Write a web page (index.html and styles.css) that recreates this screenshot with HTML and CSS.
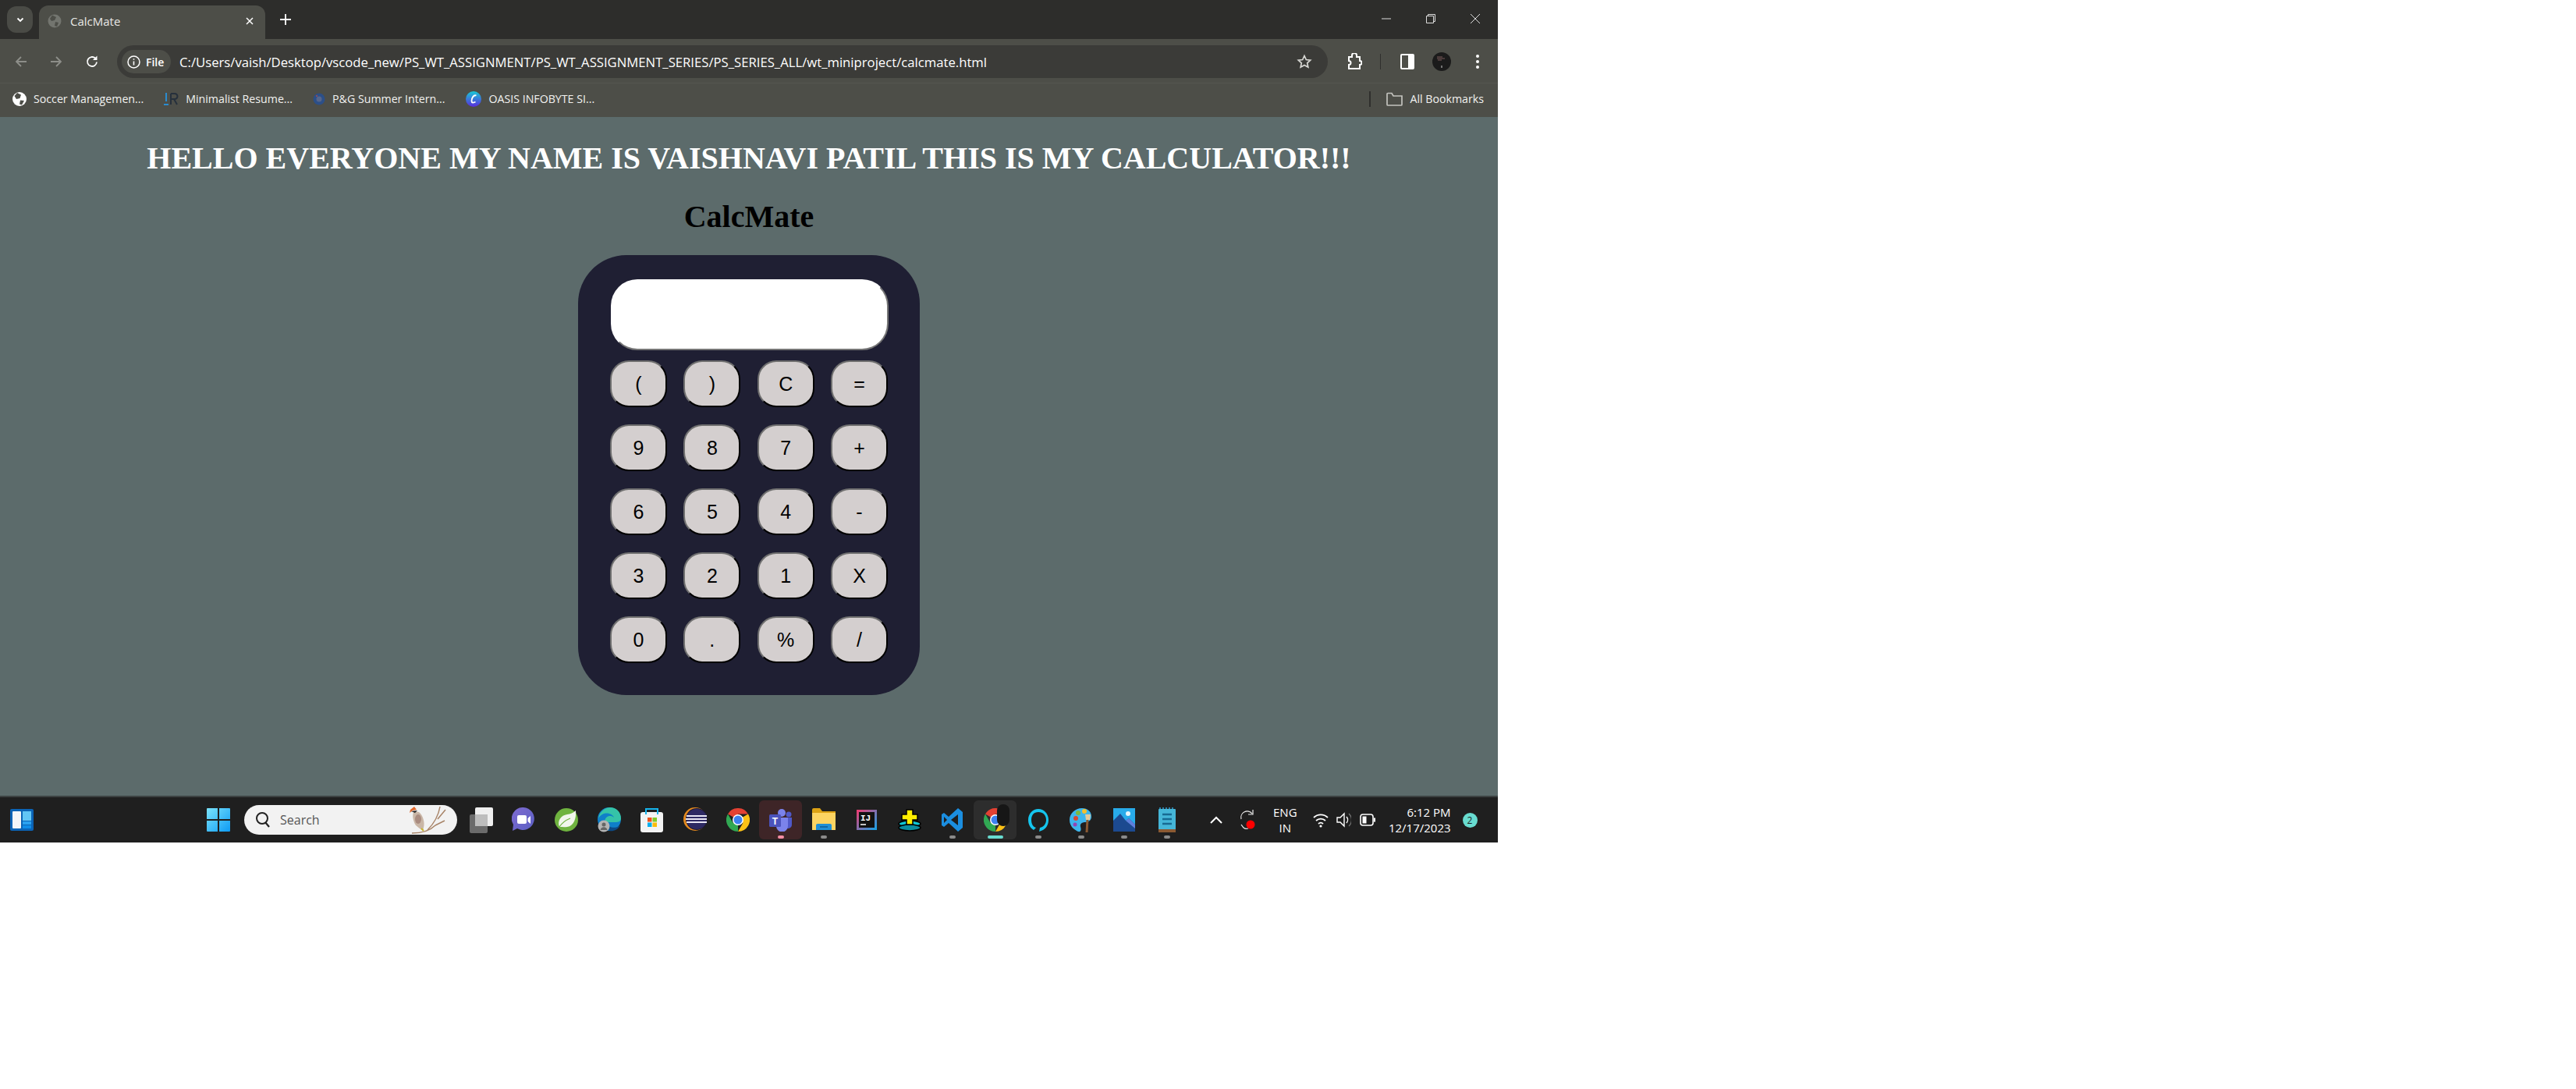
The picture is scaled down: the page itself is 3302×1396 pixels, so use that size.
FILE: index.html
```html
<!DOCTYPE html>
<html lang="en">
<head>
  <meta charset="UTF-8" />
  <title>CalcMate</title>
  <link rel="stylesheet" href="styles.css">
</head>
<body>
  <div class="screen">
    <!-- tab strip -->
    <div class="tabstrip">
      <div class="tablist">
        <svg width="12" height="12" viewBox="0 0 12 12"><path d="M2.5 4.5 6 8l3.500-3.500" fill="none" stroke="#fff" stroke-width="1.800"/></svg>
      </div>
      <div class="tab">
        <svg class="tab-icon" width="18" height="18" viewBox="0 0 18 18"><circle cx="9" cy="9" r="8.500" fill="#73756f"/><path d="M6 1.500 11 4 9 8 5 9 3 6zM10 10l4 1-2 5-3-1z" fill="#4d4e48"/></svg>
        <span class="tab-title">CalcMate</span>
        <svg class="tab-close" width="12" height="12" viewBox="0 0 12 12"><path d="M2 2l8 8M10 2l-8 8" stroke="#fff" stroke-width="1.500"/></svg>
      </div>
      <svg class="newtab" width="16" height="16" viewBox="0 0 16 16"><path d="M8 1v14M1 8h14" stroke="#fff" stroke-width="1.800"/></svg>
      <div class="winctl">
        <svg width="14" height="14" viewBox="0 0 14 14"><path d="M1 7h12" stroke="#ddd" stroke-width="1"/></svg>
        <svg width="14" height="14" viewBox="0 0 14 14"><path d="M3.500 3.500V1.500h9v9h-2M1.500 3.500h9v9h-9z" fill="none" stroke="#ddd" stroke-width="1"/></svg>
        <svg width="14" height="14" viewBox="0 0 14 14"><path d="M1 1l12 12M13 1 1 13" stroke="#ddd" stroke-width="1"/></svg>
      </div>
    </div>

    <!-- toolbar -->
    <div class="toolbar">
      <svg class="nav nav-back" width="18" height="18" viewBox="0 0 18 18"><path d="M16 9H3M9 3 3 9l6 6" fill="none" stroke="#8d8e89" stroke-width="1.800"/></svg>
      <svg class="nav nav-fwd" width="18" height="18" viewBox="0 0 18 18"><path d="M2 9h13M9 3l6 6-6 6" fill="none" stroke="#8d8e89" stroke-width="1.800"/></svg>
      <svg class="nav nav-reload" width="18" height="18" viewBox="0 0 18 18"><path d="M15 9.500A6 6 0 1 1 13 4.500" fill="none" stroke="#fff" stroke-width="1.800"/><path d="M15.500 1.500v5.500H10z" fill="#fff"/></svg>
      <div class="omnibox">
        <div class="chip">
          <svg width="17" height="17" viewBox="0 0 17 17"><circle cx="8.500" cy="8.500" r="7.500" fill="none" stroke="#fff" stroke-width="1.500"/><path d="M8.500 7.500v5M8.500 4.200v1.600" stroke="#fff" stroke-width="1.600"/></svg>
          <span>File</span>
        </div>
        <span class="url">C:/Users/vaish/Desktop/vscode_new/PS_WT_ASSIGNMENT/PS_WT_ASSIGNMENT_SERIES/PS_SERIES_ALL/wt_miniproject/calcmate.html</span>
        <svg class="star" width="20" height="20" viewBox="0 0 20 20"><path d="M10 2.500l2.300 5 5.400.6-4 3.700 1.100 5.400-4.800-2.700-4.800 2.700 1.100-5.400-4-3.700 5.400-.6z" fill="none" stroke="#d8d8d4" stroke-width="1.700"/></svg>
      </div>
      <svg class="tool-ext" width="20" height="22" viewBox="0 0 20 22"><path d="M3 5h4V3a3 3 0 0 1 6 0v2h4v5a2.500 2.500 0 0 1 0 5v5H3v-5a2.500 2.500 0 0 0 0-5z" fill="none" stroke="#fff" stroke-width="2"/></svg>
      <span class="tool-sep"></span>
      <svg class="tool-panel" width="18" height="20" viewBox="0 0 18 20"><rect x="1" y="1" width="16" height="18" rx="1" fill="none" stroke="#fff" stroke-width="2"/><rect x="10" y="1" width="7" height="18" fill="#fff"/></svg>
      <svg class="tool-avatar" width="24" height="24" viewBox="0 0 24 24"><circle cx="12" cy="12" r="12" fill="#1b1b1b"/><path d="M6 6h7M6 8h10M7 10h5" stroke="#7b5a5a" stroke-width="1"/><path d="M12 17v3" stroke="#ccc" stroke-width="1"/></svg>
      <svg class="tool-dots" width="6" height="20" viewBox="0 0 6 20"><circle cx="3" cy="3" r="2" fill="#fff"/><circle cx="3" cy="10" r="2" fill="#fff"/><circle cx="3" cy="17" r="2" fill="#fff"/></svg>
    </div>

    <!-- bookmarks -->
    <div class="bookmarks">
      <div class="bm bm-soccer">
        <svg width="18" height="18" viewBox="0 0 18 18"><circle cx="9" cy="9" r="9" fill="#fff"/><path d="M6 1 11 3.500 9.500 8 5 9 2.500 5zM10 10.500l5 .5-3 5.500-3-1z" fill="#4d4e48"/></svg>
        <span>Soccer Managemen...</span>
      </div>
      <div class="bm bm-resume">
        <svg width="20" height="20" viewBox="0 0 20 20"><path d="M4 2v11" stroke="#2a8ccf" stroke-width="2"/><path d="M1 17h6" stroke="#2a8ccf" stroke-width="2"/><path d="M10 3v14M10 3h5a3 3 0 0 1 0 7h-5M14 10l4 7" fill="none" stroke="#26303c" stroke-width="2"/></svg>
        <span>Minimalist Resume...</span>
      </div>
      <div class="bm bm-pg">
        <svg width="16" height="18" viewBox="0 0 16 18"><circle cx="8" cy="9" r="7.500" fill="#2c4f88"/><circle cx="8" cy="9" r="3.500" fill="#56658a"/><circle cx="5" cy="5" r="1" fill="#b04a4a"/></svg>
        <span>P&amp;G Summer Intern...</span>
      </div>
      <div class="bm bm-oasis">
        <svg width="20" height="20" viewBox="0 0 20 20"><defs><linearGradient id="oasis" x1="0" y1="0" x2="0" y2="1"><stop offset="0" stop-color="#19c9d6"/><stop offset="1" stop-color="#5a2bdc"/></linearGradient></defs><circle cx="10" cy="10" r="10" fill="url(#oasis)"/><path d="M13.500 5.500C10 4 7.500 9 7.500 12.500c0 2.500 2.500 2.500 5 1" fill="none" stroke="#fff" stroke-width="1.800"/></svg>
        <span>OASIS INFOBYTE SI...</span>
      </div>
      <span class="bm-sep"></span>
      <div class="bm bm-all">
        <svg width="21" height="18" viewBox="0 0 21 18"><path d="M1 2.500V16a1 1 0 0 0 1 1h17a1 1 0 0 0 1-1V5H9L7 1.500H2a1 1 0 0 0-1 1z" fill="none" stroke="#c4c4bf" stroke-width="1.700"/></svg>
        <span>All Bookmarks</span>
      </div>
    </div>

    <!-- page -->
    <main class="page">
      <h1>HELLO EVERYONE MY NAME IS VAISHNAVI PATIL THIS IS MY CALCULATOR!!!</h1>
      <h2>CalcMate</h2>
      <div class="calculator">
        <input class="display" type="text" />
        <div class="keys">
          <button>(</button><button>)</button><button>C</button><button>=</button>
          <button>9</button><button>8</button><button>7</button><button>+</button>
          <button>6</button><button>5</button><button>4</button><button>-</button>
          <button>3</button><button>2</button><button>1</button><button>X</button>
          <button>0</button><button>.</button><button>%</button><button>/</button>
        </div>
      </div>
    </main>

    <!-- taskbar -->
    <footer class="taskbar">
      <svg class="tb-widgets" width="30" height="28" viewBox="0 0 30 28"><rect width="30" height="28" rx="2" fill="#0b63b5"/><rect x="3" y="3" width="11" height="22" rx="1" fill="#f4f6f8"/><rect x="16" y="3" width="11" height="12" fill="#62c6f5"/><rect x="16" y="16" width="11" height="4" fill="#2aa2f0"/><rect x="16" y="21" width="11" height="4" fill="#0f8de8"/></svg>
      <svg class="tb-start" width="30" height="30" viewBox="0 0 30 30"><defs><linearGradient id="win" x1="0" y1="0" x2="1" y2="1"><stop offset="0" stop-color="#7be3fb"/><stop offset="1" stop-color="#0d9bf5"/></linearGradient></defs><path d="M1 0h13v14H0V1a1 1 0 0 1 1-1zM16 0h13a1 1 0 0 1 1 1v13H16zM0 16h14v14H1a1 1 0 0 1-1-1zM16 16h14v13a1 1 0 0 1-1 1H16z" fill="url(#win)"/></svg>
      <div class="search">
        <svg width="20" height="22" viewBox="0 0 20 22"><circle cx="9" cy="9" r="7" fill="none" stroke="#222" stroke-width="2"/><path d="M13 14l5 6" stroke="#222" stroke-width="2.200"/></svg>
        <span>Search</span>
        <svg class="search-bird" width="60" height="38" viewBox="0 0 60 38"><path d="M10 36c12 0 22-2 30-10M30 32C38 24 44 14 46 2M40 26l12-6M43 18l10-12" fill="none" stroke="#a88468" stroke-width="1.500"/><path d="M13 8c-3 3-2 12 2 18 3 3 7 5 9 7l1-4c2-7-1-16-6-20z" fill="#c9b6a6"/><path d="M13 2l3 4-5 1-4 3 1-4z" fill="#e0692e"/><path d="M9 8l8-1-3 3z" fill="#222"/><ellipse cx="18" cy="18" rx="4" ry="6" fill="#a98b7f"/><path d="M22 30l3 3" stroke="#c9b82e" stroke-width="2"/></svg>
      </div>
      <svg class="tb-taskview" width="30" height="33" viewBox="0 0 30 33"><rect y="9" width="23" height="24" rx="2" fill="#6b6b6b"/><rect x="7" y="0" width="23" height="24" rx="2" fill="#efefef"/><rect x="7" y="9" width="16" height="15" fill="#bdbdbd"/></svg>

      <div class="apps">
        <div class="app"><svg width="30" height="32" viewBox="0 0 30 32"><defs><linearGradient id="meet" x1="0" y1="0" x2="1" y2="1"><stop offset="0" stop-color="#7f6bd0"/><stop offset="1" stop-color="#5a5fc4"/></linearGradient></defs><path d="M15 0a14.500 14.500 0 1 1-8 27l-6 3 1-8A14.500 14.500 0 0 1 15 0z" fill="url(#meet)"/><rect x="7" y="10" width="12" height="11" rx="2" fill="#fff"/><path d="M20.500 14l3.500-3v10l-3.500-3z" fill="#fff"/></svg></div>
        <div class="app"><svg width="30" height="32" viewBox="0 0 30 32"><circle cx="15" cy="16" r="15" fill="#6fb33f"/><path d="M6 25c-3-8 2-15 10-16 4-.5 8-2 11-5 1 9-2 20-11 21-4 .5-7 0-10 0z" fill="#f1f6ec"/><path d="M6 25c4-6 9-9 14-11" stroke="#6fb33f" stroke-width="1.200" fill="none"/></svg></div>
        <div class="app"><svg width="30" height="32" viewBox="0 0 30 32"><circle cx="15" cy="15" r="15" fill="#0f7fc9"/><path d="M1 14C3 4 11 0 16 0c8 0 14 6 14 14 0 4-3 5-8 5H9c0-8 8-10 12-6-2-6-14-9-20 1z" fill="#35c3a8"/><path d="M12 20c2 6 10 8 17 3-3 6-9 8-14 7z" fill="#0c4a86"/><circle cx="8" cy="24" r="7.500" fill="#b4b4b4"/><circle cx="8" cy="22" r="2.500" fill="#666"/><path d="M3.500 29c1-5 8-5 9 0z" fill="#666"/></svg></div>
        <div class="app"><svg width="30" height="32" viewBox="0 0 30 32"><rect y="6" width="29" height="26" rx="3" fill="#f3f3f3"/><path d="M7 9V2h15v7" fill="none" stroke="#16b4ec" stroke-width="2"/><rect x="9" y="13" width="5.500" height="5.500" fill="#f1511b"/><rect x="15.500" y="13" width="5.500" height="5.500" fill="#80cc28"/><rect x="9" y="19.500" width="5.500" height="5.500" fill="#00adef"/><rect x="15.500" y="19.500" width="5.500" height="5.500" fill="#fbbc09"/></svg></div>
        <div class="app"><svg width="30" height="32" viewBox="0 0 30 32"><circle cx="15" cy="15" r="15" fill="#e58a1f"/><circle cx="17" cy="15" r="14" fill="#1d1b35"/><circle cx="17" cy="15" r="13" fill="#2e2a63"/><path d="M4 11h26M3 15h27M4 19h26" stroke="#e8e6f3" stroke-width="2"/></svg></div>
        <div class="app"><svg class="chrome-logo" width="30" height="30" viewBox="0 0 30 30"><use href="#chrome-mark"/></svg></div>
        <div class="app app-teams"><svg width="30" height="30" viewBox="0 0 30 30"><circle cx="16" cy="6" r="5" fill="#7b83eb"/><circle cx="25" cy="8" r="3.500" fill="#5059c9"/><path d="M20 12h9v9a5 5 0 0 1-9 3z" fill="#5059c9"/><path d="M9 12h15v11a7.500 7.500 0 0 1-15 0z" fill="#7b83eb"/><rect y="8" width="15" height="16" rx="1.500" fill="#4b53bc"/><text class="teams-t" x="7.500" y="20.500">T</text></svg><i class="dot dot-pink"></i></div>
        <div class="app"><svg width="30" height="30" viewBox="0 0 30 30"><path d="M0 2a2 2 0 0 1 2-2h8l3 4h17v24H0z" fill="#dca214"/><path d="M0 6h30v22H0z" fill="#fcd462"/><path d="M5 28v-6a2 2 0 0 1 2-2h16a2 2 0 0 1 2 2v6z" fill="#1f8fd6"/><path d="M10 24h10" stroke="#0d5c94" stroke-width="1.500"/></svg><i class="dot"></i></div>
        <div class="app"><svg width="26" height="26" viewBox="0 0 26 26"><defs><linearGradient id="ij" x1="0" y1="0" x2="1" y2="1"><stop offset="0" stop-color="#f5386e"/><stop offset="1" stop-color="#10a4ea"/></linearGradient></defs><rect width="26" height="26" fill="url(#ij)"/><rect x="3" y="3" width="20" height="20" fill="#111"/><text class="ij-t" x="5" y="14">IJ</text><path d="M5 19h7" stroke="#fff" stroke-width="1.500"/></svg></div>
        <div class="app"><svg width="30" height="30" viewBox="0 0 30 30"><ellipse cx="15" cy="20" rx="14" ry="4" fill="#0fc6d6" stroke="#000" stroke-width="1.500"/><ellipse cx="15" cy="25" rx="14" ry="4" fill="#0a8da0" stroke="#000" stroke-width="1.500"/><path d="M11 2h8v6h6v7h-6v6h-8v-6H5V8h6z" fill="#ffef00" stroke="#000" stroke-width="1.500"/></svg></div>
        <div class="app"><svg width="30" height="30" viewBox="0 0 30 30"><path d="M22 0l6 5v20l-6 5-12-11-6 5-3-2V8l3-2 6 5z" fill="#1b8ee0"/><path d="M22 8v14l-9-7z" fill="#1e1e1e"/><path d="M4 11v8l4-4z" fill="#1e1e1e"/></svg><i class="dot"></i></div>
        <div class="app app-active"><svg class="chrome-logo" width="30" height="30" viewBox="0 0 30 30"><g id="chrome-mark"><path d="M15 15 2 7.500A15 15 0 0 1 28 7.500H15z" fill="#e34133"/><path d="M15 15 28 7.500A15 15 0 0 1 15 30l6.500-11.250z" fill="#fbc116"/><path d="M15 15 15 30A15 15 0 0 1 2 7.500l6.500 11.250z" fill="#31a853"/><circle cx="15" cy="15" r="7" fill="#fff"/><circle cx="15" cy="15" r="5.500" fill="#3d81f0"/></g></svg><span class="chrome-badge"></span><i class="dot dot-teal"></i></div>
        <div class="app"><svg width="30" height="32" viewBox="0 0 30 32"><path d="M9 29C4 26 2 21 2 16 2 8 8 2 15 2s13 6 13 14c0 5-2 10-7 13l-5 2 1-5c5-1 8-5 8-10 0-6-4-10-10-10S6 10 6 16c0 5 2 9 6 10z" fill="#15c5ee"/></svg><i class="dot"></i></div>
        <div class="app"><svg width="30" height="32" viewBox="0 0 30 32"><path d="M16 1C7 1 0 8 0 16c0 9 7 13 11 15 4 1 4-3 3-6-1-4 2-6 6-6 5 0 8-3 8-7C28 5 23 1 16 1z" fill="#3db5ec"/><circle cx="8" cy="14" r="3" fill="#d6482f"/><circle cx="11" cy="7" r="3" fill="#7eb73f"/><circle cx="19" cy="5" r="3" fill="#f5c02c"/><circle cx="7" cy="22" r="2.500" fill="#9145b5"/><path d="M23 15l-1 17" stroke="#8a5a33" stroke-width="3"/><path d="M20 9h7l-1 7h-5z" fill="#e4c99a"/></svg><i class="dot"></i></div>
        <div class="app"><svg width="28" height="30" viewBox="0 0 28 30"><rect width="28" height="30" fill="#28abea"/><path d="M0 30V16L9 7l7 9 4-3 8 8v9z" fill="#1c4a90"/><path d="M16 16l4-3 8 8v5z" fill="#5f7fdc"/><circle cx="19" cy="7" r="3" fill="#e8f6fc"/></svg><i class="dot"></i></div>
        <div class="app"><svg width="22" height="32" viewBox="0 0 22 32"><rect y="2" width="22" height="30" rx="1" fill="#45b6d8"/><rect y="28" width="22" height="4" fill="#8a5a33"/><path d="M2 2V0M6 2V0M10 2V0M14 2V0M18 2V0" stroke="#2d7fa8" stroke-width="2"/><path d="M5 9h12M5 15h12M5 21h12" stroke="#176a92" stroke-width="2.500"/></svg><i class="dot"></i></div>
      </div>

      <div class="tray">
        <svg class="tray-chevron" width="16" height="10" viewBox="0 0 16 10"><path d="M1 9l7-7 7 7" fill="none" stroke="#fff" stroke-width="2"/></svg>
        <svg class="tray-sync" width="22" height="30" viewBox="0 0 22 30"><path d="M3 14a8 8 0 0 1 14-7M3 21l3 4a6 6 0 0 0 6 1" fill="none" stroke="#eee" stroke-width="1.200"/><path d="M18 2v6h-6" fill="none" stroke="#eee" stroke-width="1.200"/><circle cx="15" cy="21" r="5.500" fill="#f00"/></svg>
        <div class="tray-lang">ENG<br>IN</div>
        <svg class="tray-wifi" width="20" height="22" viewBox="0 0 20 22"><path d="M1 8a13 13 0 0 1 18 0M4 12a9 9 0 0 1 12 0M7 16a4.500 4.500 0 0 1 6 0" fill="none" stroke="#fff" stroke-width="1.800"/><circle cx="10" cy="19" r="1.600" fill="#fff"/></svg>
        <svg class="tray-speaker" width="19" height="24" viewBox="0 0 19 24"><path d="M1 9h4l5-5v16l-5-5H1z" fill="none" stroke="#fff" stroke-width="1.400"/><path d="M13 8a6 6 0 0 1 0 8" fill="none" stroke="#fff" stroke-width="1.400"/><path d="M16 4a11 11 0 0 1 0 16" fill="none" stroke="#777" stroke-width="1.200"/></svg>
        <svg class="tray-battery" width="20" height="16" viewBox="0 0 20 16"><rect x="1" y="1" width="16" height="14" rx="3" fill="none" stroke="#fff" stroke-width="1.600"/><rect x="3.500" y="3.500" width="5" height="9" fill="#fff"/><rect x="18" y="5.500" width="2" height="5" fill="#fff"/></svg>
        <div class="tray-clock">6:12 PM<br>12/17/2023</div>
        <div class="tray-badge">2</div>
      </div>
    </footer>
  </div>
</body>
</html>
```

FILE: styles.css
```css
* {
  box-sizing: border-box;
}

body {
  margin: 0;
  background-color: white;
  font-family: 'Open Sans', sans-serif;
}

.screen {
  width: 1920px;
  height: 1080px;
  display: flex;
  flex-direction: column;
}

/* tab strip */
.tabstrip {
  height: 50px;
  background-color: #2d2d2b;
  display: flex;
  align-items: flex-end;
  color: white;
}

.tablist {
  width: 33px;
  height: 34px;
  margin: 0 8px 8px 9px;
  border-radius: 12px;
  background-color: #4a4b46;
  display: flex;
  align-items: center;
  justify-content: center;
}

.tab {
  width: 290px;
  height: 43px;
  padding: 0 14px 4px 11px;
  background-color: #4d4e48;
  border-radius: 12px 12px 0 0;
  display: flex;
  align-items: center;
}

.tab-title {
  margin-left: 11px;
  font-size: 15px;
  color: #e8e8e6;
  flex: 1;
}

.newtab {
  margin: 0 0 17px 18px;
}

.winctl {
  margin-left: auto;
  margin-bottom: 19px;
  padding-right: 22px;
  display: flex;
  gap: 43px;
}

/* toolbar */
.toolbar {
  height: 57px;
  padding-top: 2px;
  background-color: #4d4e48;
  display: flex;
  align-items: center;
  border-bottom: 1px solid #555650;
}

.nav-back {
  margin-left: 18px;
}

.nav-fwd {
  margin-left: 27px;
}

.nav-reload {
  margin-left: 28px;
}

.omnibox {
  width: 1552px;
  height: 42px;
  margin-left: 23px;
  padding: 0 20px 0 6px;
  border-radius: 21px;
  background-color: #3b3b38;
  display: flex;
  align-items: center;
}

.chip {
  width: 63px;
  height: 30px;
  padding-left: 7px;
  border-radius: 15px;
  background-color: #4d4e48;
  color: white;
  font-size: 14px;
  font-weight: 600;
  display: flex;
  align-items: center;
  gap: 7px;
}

.url {
  margin-left: 11px;
  font-size: 16.7px;
  color: white;
  white-space: nowrap;
  flex: 1;
}

.tool-ext {
  margin-left: 24px;
}

.tool-sep {
  width: 1px;
  height: 20px;
  margin-left: 23px;
  background-color: #2f2f2d;
}

.tool-panel {
  margin-left: 25px;
}

.tool-avatar {
  margin-left: 23px;
}

.tool-dots {
  margin-left: 31px;
}

/* bookmarks */
.bookmarks {
  height: 43px;
  background-color: #4d4e48;
  display: flex;
  align-items: center;
  padding-bottom: 4px;
  font-size: 14.2px;
  color: #f2f2f0;
}

.bm {
  display: flex;
  align-items: center;
  gap: 9px;
  white-space: nowrap;
}

.bm-soccer {
  margin-left: 16px;
}

.bm-resume {
  margin-left: 25px;
}

.bm-pg {
  margin-left: 26px;
}

.bm-oasis {
  margin-left: 27px;
}

.bm-sep {
  width: 2px;
  height: 20px;
  margin-left: auto;
  background-color: #2f2f2d;
}

.bm-all {
  margin: 0 18px 0 20px;
}

/* page */
.page {
  flex: 1;
  background-color: #5c6b6b;
  display: flex;
  flex-direction: column;
  align-items: center;
  padding-top: 30px;
}

h1 {
  margin: 0;
  font-family: 'Liberation Serif', serif;
  font-size: 40px;
  line-height: 46px;
  color: white;
}

h2 {
  margin: 29px 0 26px;
  font-family: 'Liberation Serif', serif;
  font-size: 40px;
  line-height: 46px;
  color: black;
}

.calculator {
  width: 438px;
  height: 564px;
  padding: 31px 41px;
  border-radius: 62px;
  background-color: #1f1f33;
}

.display {
  display: block;
  width: 356px;
  height: 91px;
  margin-left: 1px;
  border-radius: 34px;
  background-color: white;
  border-style: solid;
  border-width: 2px;
  border-color: white #767676 #767676 white;
}

.keys {
  width: 356px;
  margin-top: 13px;
  display: grid;
  grid-template-columns: repeat(4, 73px);
  justify-content: space-between;
  row-gap: 22px;
}

.keys button {
  height: 60px;
  border-style: solid;
  border-width: 2px;
  border-color: #6f6f6f black black #6f6f6f;
  border-radius: 24px;
  background-color: #d4cfcf;
  font-family: 'Liberation Sans', sans-serif;
  font-size: 25px;
  color: black;
}

/* taskbar */
.taskbar {
  height: 60px;
  background-color: #1f1f1f;
  border-top: 2px solid #3c4242;
  display: flex;
  align-items: center;
  color: white;
}

.tb-widgets {
  margin-left: 13px;
}

.tb-start {
  margin-left: 222px;
}

.search {
  width: 273px;
  height: 38px;
  margin-left: 18px;
  padding-left: 14px;
  border-radius: 19px;
  background-color: #f2f2f2;
  color: #555;
  font-size: 16px;
  display: flex;
  align-items: center;
  gap: 12px;
  overflow: hidden;
}

.search-bird {
  margin-left: auto;
  margin-right: 8px;
}

.tb-taskview {
  margin-left: 16px;
}

.apps {
  margin-left: 11px;
  display: flex;
}

.app {
  position: relative;
  width: 55px;
  height: 50px;
  display: flex;
  align-items: center;
  justify-content: center;
  border-radius: 6px;
}

.app-teams {
  background-color: #3e2527;
}

.app-active {
  background-color: #2d2d2d;
}

.dot {
  position: absolute;
  left: 50%;
  bottom: 1px;
  width: 8px;
  height: 4px;
  margin-left: -4px;
  border-radius: 2px;
  background-color: #8b8b8b;
}

.dot-pink {
  background-color: #f58ea3;
}

.dot-teal {
  width: 20px;
  margin-left: -10px;
  background-color: #68dcd0;
}

.chrome-badge {
  position: absolute;
  top: 5px;
  right: 9px;
  width: 16px;
  height: 28px;
  border-radius: 8px;
  background-color: #161616;
}

.teams-t {
  font-family: 'Liberation Sans', sans-serif;
  font-size: 12px;
  font-weight: 700;
  fill: white;
  text-anchor: middle;
}

.ij-t {
  font-family: 'Liberation Mono', monospace;
  font-size: 11px;
  font-weight: 700;
  fill: white;
}

.tray {
  flex: 1;
  display: flex;
  align-items: center;
}

.tray-chevron {
  margin-left: 28px;
}

.tray-sync {
  margin-left: 21px;
}

.tray-lang {
  margin-left: 22px;
  font-size: 15px;
  line-height: 20px;
  text-align: center;
}

.tray-wifi {
  margin-left: 20px;
}

.tray-speaker {
  margin-left: 10px;
}

.tray-battery {
  margin-left: 11px;
}

.tray-clock {
  width: 97px;
  font-size: 15px;
  line-height: 20px;
  text-align: right;
}

.tray-badge {
  width: 19px;
  height: 19px;
  margin-left: 15px;
  border-radius: 50%;
  background-color: #68dcd0;
  color: #1f1f1f;
  font-size: 12px;
  line-height: 19px;
  text-align: center;
}
```
